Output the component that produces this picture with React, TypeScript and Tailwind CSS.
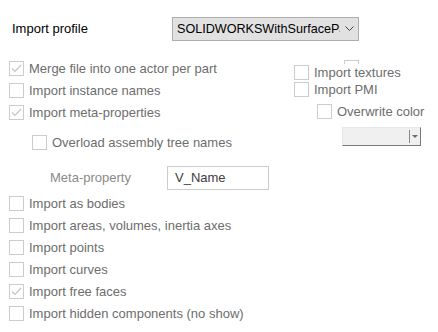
import React from "react";

const FONT = { fontFamily: '"Liberation Sans", Arial, sans-serif' };

function Box({ checked = false }: { checked?: boolean }) {
  return (
    <div className="w-[15px] h-[15px] border border-[#cccccc] bg-white flex items-center justify-center flex-shrink-0">
      {checked && (
        <svg width="11" height="9" viewBox="0 0 11 9">
          <path d="M1 4.5 L4 7.5 L10 1" fill="none" stroke="#c4c4c4" strokeWidth="1.2" />
        </svg>
      )}
    </div>
  );
}

function Check({ label, checked = false, h = "h-[22px]" }: { label: string; checked?: boolean; h?: string }) {
  return (
    <div className={`flex items-center gap-[5px] ${h}`}>
      <Box checked={checked} />
      <span className="text-[13px] text-[#6d6d6d] whitespace-nowrap leading-none">{label}</span>
    </div>
  );
}

export default function App() {
  return (
    <div className="w-[438px] h-[332px] bg-white overflow-hidden" style={FONT}>
      {/* Import profile */}
      <div className="flex items-center pt-[17px]">
        <span className="ml-[12px] w-[160px] text-[13px] text-black">Import profile</span>
        <div className="w-[187px] h-[24px] bg-[#e1e1e1] border border-[#adadad] flex items-center pl-[4px] pr-[4px]">
          <span className="flex-1 overflow-hidden whitespace-nowrap text-[12.6px] text-black">SOLIDWORKSWithSurfacePa</span>
          <svg width="9" height="6" viewBox="0 0 9 6" className="ml-[5px] flex-shrink-0">
            <path d="M0.5 0.5 L4.5 4.5 L8.5 0.5" fill="none" stroke="#404040" strokeWidth="1" />
          </svg>
        </div>
      </div>

      {/* Top options */}
      <div className="flex mt-[16px]">
        <div className="w-[294px] pl-[9px]">
          <Check label="Merge file into one actor per part" checked />
          <Check label="Import instance names" />
          <Check label="Import meta-properties" checked />
          <div className="pl-[23px] mt-[8px]">
            <Check label="Overload assembly tree names" />
          </div>
        </div>
        <div className="flex flex-col">
          <div className="ml-[50px] mt-[3px] w-[15px] h-[4px] border-t border-l border-r border-[#cccccc]" />
          <div>
            <Check label="Import textures" h="h-[17px]" />
            <Check label="Import PMI" h="h-[17px]" />
          </div>
          <div className="ml-[23px] mt-[5px]">
            <Check label="Overwrite color" h="h-[17px]" />
          </div>
          <div className="ml-[48px] mt-[7px] w-[79px] h-[19px] bg-[#f0f0f0] border-t border-l border-[#e6e6e6] border-b border-r border-b-[#7a7a7a] border-r-[#7a7a7a] flex items-center justify-end pr-[2px]">
            <div className="w-px h-[13px] bg-[#8a8a8a] mr-[2px]" />
            <svg width="6" height="4" viewBox="0 0 6 4">
              <path d="M0 0 L6 0 L3 3 Z" fill="#6d6d6d" />
            </svg>
          </div>
        </div>
      </div>

      {/* Meta-property */}
      <div className="flex items-center mt-[13px]">
        <span className="ml-[50px] w-[117px] text-[13px] text-[#8a8a8a]">Meta-property</span>
        <div className="w-[102px] h-[24px] border border-[#cccccc] flex items-center pl-[7px]">
          <span className="text-[13px] text-[#404040]">V_Name</span>
        </div>
      </div>

      {/* Lower options */}
      <div className="pl-[9px] mt-[2px]">
        <Check label="Import as bodies" />
        <Check label="Import areas, volumes, inertia axes" />
        <Check label="Import points" />
        <Check label="Import curves" />
        <Check label="Import free faces" checked />
        <Check label="Import hidden components (no show)" />
      </div>
    </div>
  );
}
